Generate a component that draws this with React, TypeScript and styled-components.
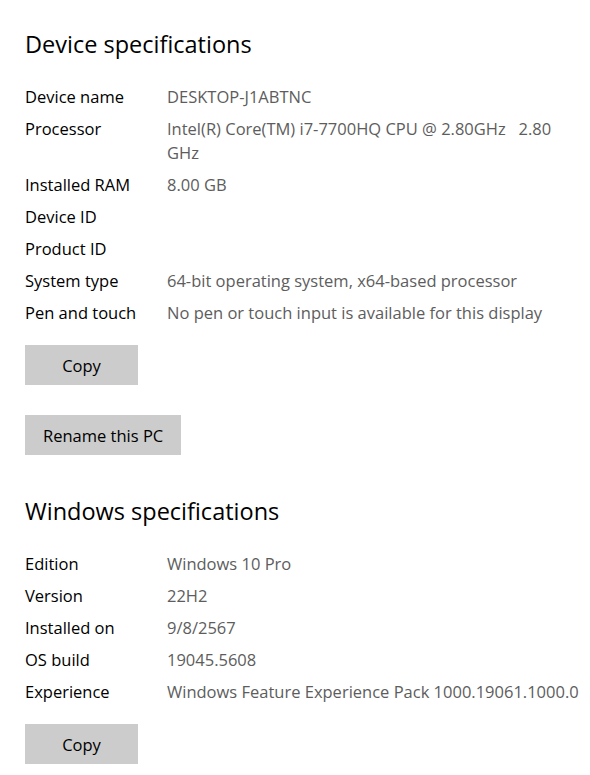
import React from "react";
import styled, { createGlobalStyle } from "styled-components";

const Global = createGlobalStyle`
  html, body { margin: 0; padding: 0; background: #ffffff; }
  body { font-family: "Open Sans", "Noto Sans", sans-serif; -webkit-font-smoothing: antialiased; }
`;

const Page = styled.div`
  display: flex;
  flex-direction: column;
  padding: 29px 10px 0 25px;
  width: 590px;
  box-sizing: border-box;
`;

const Section = styled.section<{ $top?: number }>`
  display: flex;
  flex-direction: column;
  margin-top: ${(p) => p.$top ?? 0}px;
`;

const Heading = styled.h2`
  margin: 0;
  font-size: 23.5px;
  line-height: 30px;
  font-weight: 400;
  color: #000;
`;

const Specs = styled.dl`
  display: grid;
  grid-template-columns: 142px 1fr;
  row-gap: 8px;
  margin: 26px 0 0 0;
  font-size: 16.5px;
  line-height: 24px;
`;

const Label = styled.dt`
  margin: 0;
  color: #000;
`;

const Value = styled.dd`
  margin: 0;
  color: #5d5d5d;
  white-space: pre-wrap;
`;

const Button = styled.button<{ $top: number }>`
  align-self: flex-start;
  margin-top: ${(p) => p.$top}px;
  height: 40px;
  min-width: 113px;
  padding: 0 18px;
  border: none;
  background: #cccccc;
  color: #000;
  font-family: inherit;
  font-size: 16.5px;
  cursor: pointer;
`;

const device: [string, string][] = [
  ["Device name", "DESKTOP-J1ABTNC"],
  ["Processor", "Intel(R) Core(TM) i7-7700HQ CPU @ 2.80GHz   2.80 GHz"],
  ["Installed RAM", "8.00 GB"],
  ["Device ID", ""],
  ["Product ID", ""],
  ["System type", "64-bit operating system, x64-based processor"],
  ["Pen and touch", "No pen or touch input is available for this display"],
];

const windows: [string, string][] = [
  ["Edition", "Windows 10 Pro"],
  ["Version", "22H2"],
  ["Installed on", "9/8/2567"],
  ["OS build", "19045.5608"],
  ["Experience", "Windows Feature Experience Pack 1000.19061.1000.0"],
];

function SpecList({ items }: { items: [string, string][] }) {
  return (
    <Specs>
      {items.map(([k, v]) => (
        <React.Fragment key={k}>
          <Label>{k}</Label>
          <Value>{v}</Value>
        </React.Fragment>
      ))}
    </Specs>
  );
}

export default function App() {
  return (
    <>
      <Global />
      <Page>
        <Section>
          <Heading>Device specifications</Heading>
          <SpecList items={device} />
          <Button $top={20}>Copy</Button>
          <Button $top={30}>Rename this PC</Button>
        </Section>
        <Section $top={41}>
          <Heading>Windows specifications</Heading>
          <SpecList items={windows} />
          <Button $top={20}>Copy</Button>
        </Section>
      </Page>
    </>
  );
}
